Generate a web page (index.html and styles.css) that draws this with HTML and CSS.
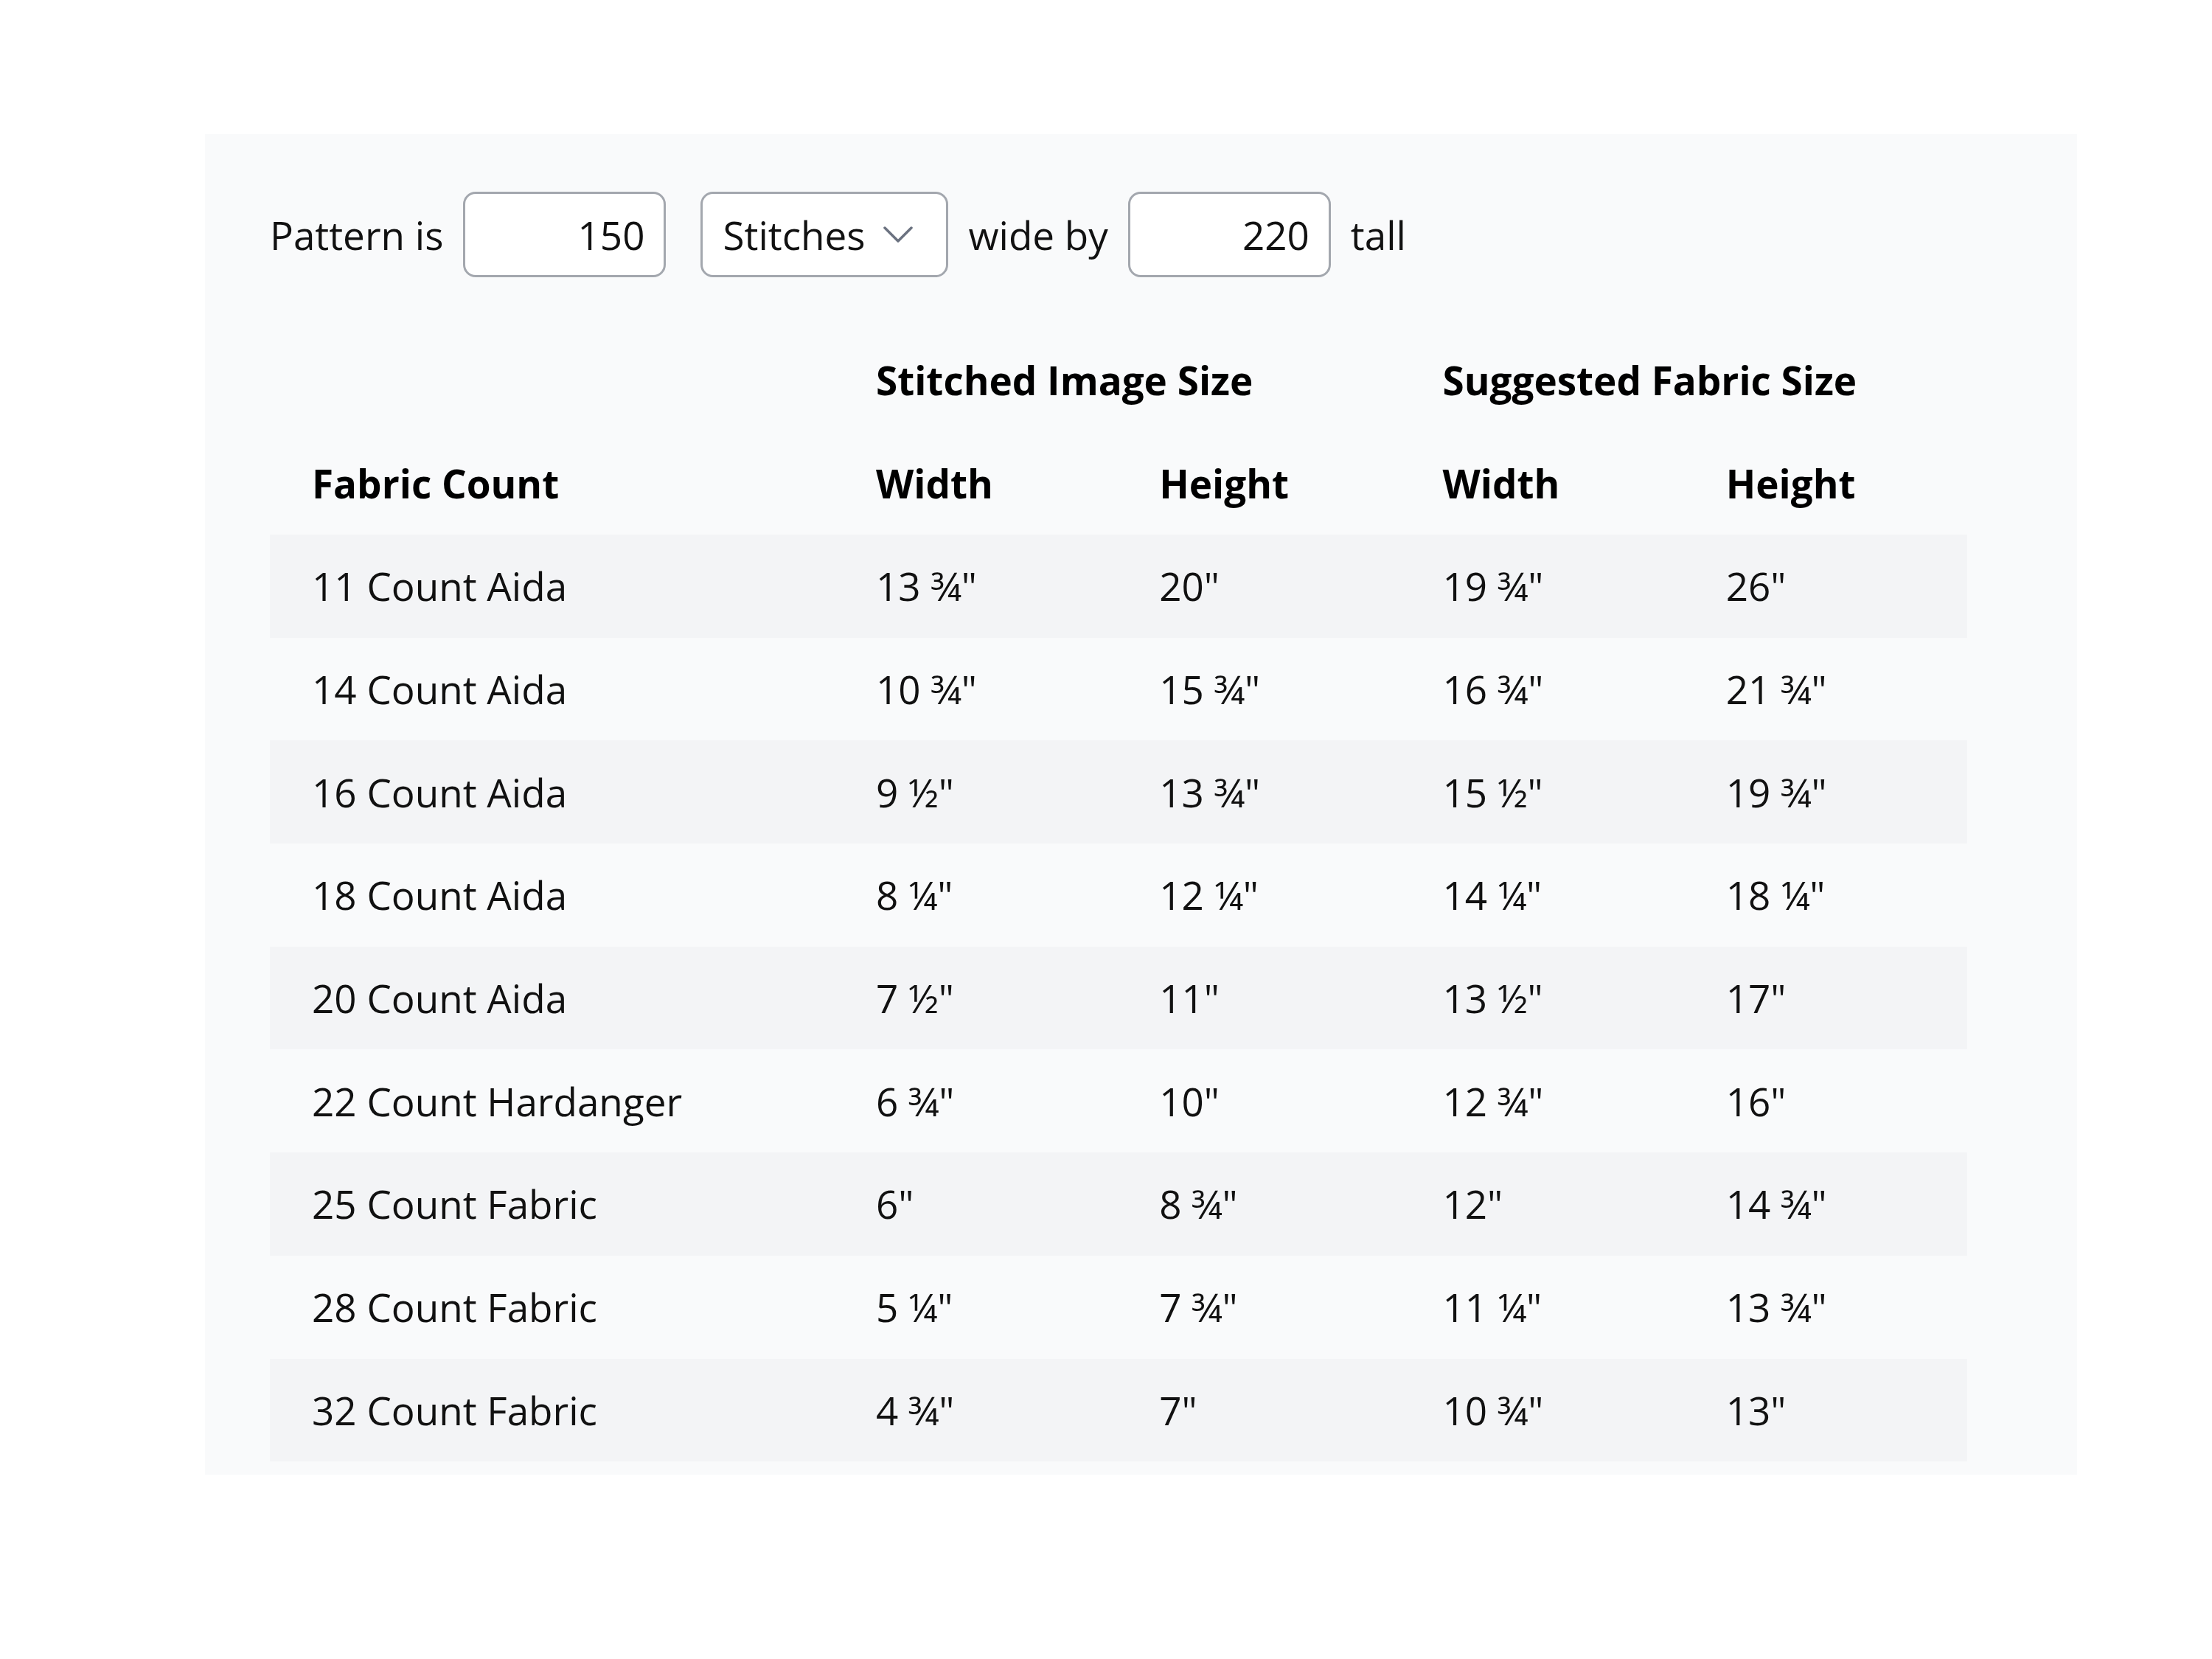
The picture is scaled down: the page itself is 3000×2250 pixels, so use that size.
FILE: index.html
```html
<!DOCTYPE html>
<html lang="en">
<head>
<meta charset="utf-8">
<title>Fabric Size Calculator</title>
<link rel="stylesheet" href="styles.css">
</head>
<body>
<main class="page">
  <section class="panel">
    <div class="controls">
      <span class="label">Pattern is</span>
      <input class="num-input" type="text" value="150">
      <div class="select">
        <span>Stitches</span>
        <svg class="chev" width="40" height="22" viewBox="0 0 40 22"><path d="M2 2 L20 20 L38 2" fill="none" stroke="#6b7280" stroke-width="3.5" stroke-linecap="round" stroke-linejoin="round"/></svg>
      </div>
      <span class="label">wide by</span>
      <input class="num-input" type="text" value="220">
      <span class="label">tall</span>
    </div>
    <table class="sizes">
      <colgroup>
        <col class="c-first"><col class="c"><col class="c"><col class="c"><col class="c">
      </colgroup>
      <thead>
        <tr><th></th><th colspan="2">Stitched Image Size</th><th colspan="2">Suggested Fabric Size</th></tr>
        <tr><th>Fabric Count</th><th>Width</th><th>Height</th><th>Width</th><th>Height</th></tr>
      </thead>
      <tbody>
        <tr><td>11 Count Aida</td><td>13 ¾"</td><td>20"</td><td>19 ¾"</td><td>26"</td></tr>
        <tr><td>14 Count Aida</td><td>10 ¾"</td><td>15 ¾"</td><td>16 ¾"</td><td>21 ¾"</td></tr>
        <tr><td>16 Count Aida</td><td>9 ½"</td><td>13 ¾"</td><td>15 ½"</td><td>19 ¾"</td></tr>
        <tr><td>18 Count Aida</td><td>8 ¼"</td><td>12 ¼"</td><td>14 ¼"</td><td>18 ¼"</td></tr>
        <tr><td>20 Count Aida</td><td>7 ½"</td><td>11"</td><td>13 ½"</td><td>17"</td></tr>
        <tr><td>22 Count Hardanger</td><td>6 ¾"</td><td>10"</td><td>12 ¾"</td><td>16"</td></tr>
        <tr><td>25 Count Fabric</td><td>6"</td><td>8 ¾"</td><td>12"</td><td>14 ¾"</td></tr>
        <tr><td>28 Count Fabric</td><td>5 ¼"</td><td>7 ¾"</td><td>11 ¼"</td><td>13 ¾"</td></tr>
        <tr><td>32 Count Fabric</td><td>4 ¾"</td><td>7"</td><td>10 ¾"</td><td>13"</td></tr>
      </tbody>
    </table>
  </section>
</main>
</body>
</html>
```

FILE: styles.css
```css
html, body {
  margin: 0;
  padding: 0;
  background: #ffffff;
}

body {
  font-family: "Open Sans", "Noto Sans", "Liberation Sans", sans-serif;
  font-size: 53px;
  color: #111111;
}

.page {
  padding: 182px 0 0 278px;
}

.panel {
  width: 2539px;
  box-sizing: border-box;
  background: #f9fafb;
  padding: 78px 149px 18px 88px;
}

.controls {
  display: flex;
  align-items: center;
  gap: 27px;
  height: 116px;
}

.label {
  line-height: 1;
  white-space: nowrap;
}

.num-input {
  box-sizing: border-box;
  width: 275px;
  height: 116px;
  border: 3px solid #a3a7ae;
  border-radius: 17px;
  background: #ffffff;
  font: inherit;
  color: #111111;
  text-align: right;
  padding: 0 26px 0 20px;
  outline: none;
}

.num-input + .select {
  margin-left: 20px;
}

.select {
  box-sizing: border-box;
  width: 336px;
  height: 116px;
  border: 3px solid #a3a7ae;
  border-radius: 17px;
  background: #ffffff;
  display: flex;
  align-items: center;
  padding: 0 0 0 27px;
  gap: 24px;
}

.chev {
  display: block;
  width: 40px;
  height: 22px;
}

.sizes {
  width: 100%;
  table-layout: fixed;
  border-collapse: collapse;
  margin-top: 69px;
}

.c-first {
  width: 765px;
}

.sizes th,
.sizes td {
  text-align: left;
  padding: 0 0 0 57px;
  vertical-align: middle;
  white-space: nowrap;
}

.sizes th {
  height: 140px;
  font-weight: 700;
  color: #000000;
}

.sizes td {
  height: 139.7px;
  font-weight: 400;
}

.sizes tbody tr:nth-child(odd) {
  background: #f3f4f6;
}
```
